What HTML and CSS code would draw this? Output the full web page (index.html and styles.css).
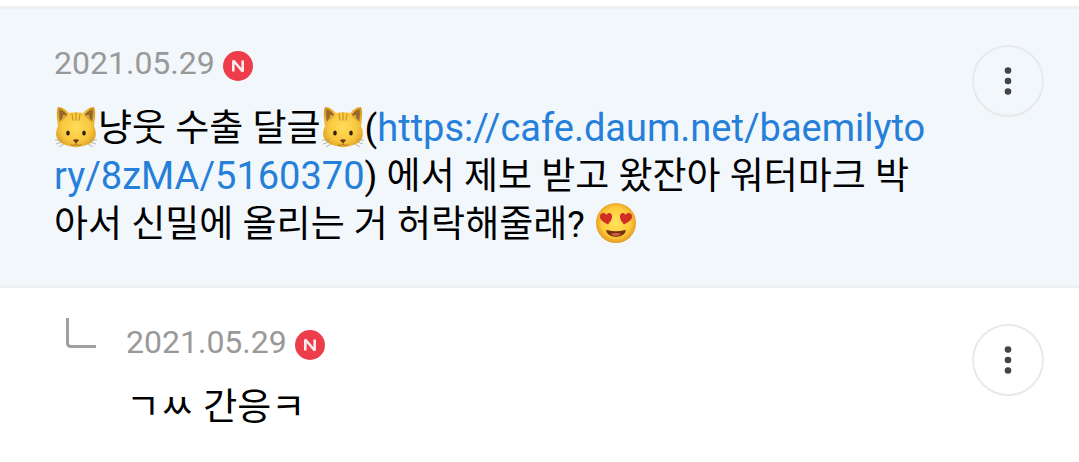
FILE: index.html
```
<!DOCTYPE html>
<html lang="ko">
<head>
<meta charset="utf-8">
<meta name="viewport" content="width=device-width, initial-scale=1">
<title>댓글</title>
<link rel="stylesheet" href="styles.css">
</head>
<body>
<svg class="defs" width="0" height="0" aria-hidden="true">
  <defs>
    <radialGradient id="fur" cx="50%" cy="50%" r="60%">
      <stop offset="0" stop-color="#ffdc58"/><stop offset="0.6" stop-color="#f8c83e"/><stop offset="1" stop-color="#d99a20"/>
    </radialGradient>
    <radialGradient id="skin" cx="50%" cy="48%" r="52%">
      <stop offset="0" stop-color="#ffe45a"/><stop offset="0.7" stop-color="#fdcb3a"/><stop offset="1" stop-color="#e69a25"/>
    </radialGradient>
    <symbol id="cat" viewBox="0 0 42 42">
      <path d="M3 20C2 13 1 5 3 1c4 0 8 3 11 6 5-1 9-1 14 0 3-3 7-6 11-6 2 4 1 12 0 19 2 4 2.500 9 1 12-2 5-8 7-12 8-5 1.500-9 1.500-14 0-4-1-10-3-12-8-1.500-3-1-8 1-12z" fill="url(#fur)"/>
      <path d="M4.500 3c3 1 6 3 8 6-3 1-6 4-7.500 7-1-5-1-9-.5-13zM37.500 3c-3 1-6 3-8 6 3 1 6 4 7.500 7 1-5 1-9 .5-13z" fill="#96692a"/>
      <path d="M8 9c2 0 3 .5 4.500 1.500-2 1-4 2.500-5.500 5.500zM34 9c-2 0-3 .5-4.500 1.500 2 1 4 2.500 5.500 5.500z" fill="#dba83c"/>
      <path d="M17 8l1 6M21 7v7M25 8l-1 6" stroke="#cf9628" stroke-width="1.300" fill="none" stroke-linecap="round"/>
      <ellipse cx="13" cy="27" rx="1.800" ry="2.600" fill="#33200c"/><ellipse cx="29" cy="27" rx="1.800" ry="2.600" fill="#33200c"/>
      <path d="M17.800 34q3.200-1.500 6.400 0l-3.200 3.500z" fill="#6c3b1b"/>
      <path d="M21 37v1.500M21 38.500q-3 2-5 0M21 38.500q3 2 5 0" stroke="#9c6822" fill="none" stroke-width=".8"/>
      <path d="M7 34l-7 0M7 36l-6 2M9 38l-5 3M35 34l7 0M35 36l6 2M33 38l5 3" stroke="#a99a78" stroke-width=".7"/>
    </symbol>
    <symbol id="hearts" viewBox="0 0 42 42">
      <circle cx="21" cy="21" r="20" fill="url(#skin)"/>
      <path d="M13 22.500C8 20 4 17 5 13.500c1-3 4.500-3.500 6.500-.500C13 10 16.500 10.500 17 13.500c.5 3.500-2 6.500-4 9z" fill="#cf2f26"/>
      <path d="M29 22.500c5-2.500 9-5.500 8-9-1-3-4.500-3.500-6.500-.500C29 10 25.500 10.500 25 13.500c-.5 3.500 2 6.500 4 9z" fill="#cf2f26"/>
      <path d="M12 28q9 2.500 18 0c1 0 .8 1 .5 2-2 3.500-6 4.800-9.500 4.800s-7.500-1.300-9.500-4.800c-.3-1-.5-2 .5-2z" fill="#70310f"/>
      <path d="M15.500 32q5.500-2 11 0-2.300 2-5.500 2t-5.500-2z" fill="#d85a42"/>
    </symbol>
    <symbol id="new" viewBox="0 0 30 30">
      <circle cx="15" cy="15" r="15" fill="#ed3d4b"/>
      <path d="M10.300 20.500v-11l9.400 11v-11" fill="none" stroke="#fff" stroke-opacity=".9" stroke-width="2.600" stroke-linejoin="bevel"/>
    </symbol>
    <symbol id="dots" viewBox="0 0 8 28">
      <circle cx="4" cy="3.500" r="3.300"/><circle cx="4" cy="14" r="3.300"/><circle cx="4" cy="24.500" r="3.300"/>
    </symbol>
  </defs>
</svg>
<main class="comments">
  <article class="comment comment-active">
    <div class="content">
      <header class="meta"><time datetime="2021-05-29">2021.05.29</time><svg class="new" role="img" aria-label="새 댓글"><use href="#new"/></svg></header>
      <p class="text"><svg class="emoji" role="img" aria-label="고양이"><use href="#cat"/></svg>냥웃 수출 달글<svg class="emoji" role="img" aria-label="고양이"><use href="#cat"/></svg>(<a href="https://cafe.daum.net/baemilytory/8zMA/5160370">https://cafe.daum.net/baemilytory/8zMA/5160370</a>) 에서 제보 받고 왔잔아 워터마크 박아서 신밀에 올리는 거 허락해줄래? <svg class="emoji" role="img" aria-label="하트 눈"><use href="#hearts"/></svg></p>
    </div>
    <button class="more" type="button" aria-label="더보기"><svg class="dots"><use href="#dots"/></svg></button>
  </article>
  <article class="comment reply">
    <svg class="branch" viewBox="0 0 30 30" aria-hidden="true"><path d="M1.500 0v25q0 3.500 3.500 3.500h25" fill="none" stroke="#a0a0a0" stroke-width="3"/></svg>
    <div class="content">
      <header class="meta"><time datetime="2021-05-29">2021.05.29</time><svg class="new" role="img" aria-label="새 댓글"><use href="#new"/></svg></header>
      <p class="text">ㄱㅆ 간응ㅋ</p>
    </div>
    <button class="more" type="button" aria-label="더보기"><svg class="dots"><use href="#dots"/></svg></button>
  </article>
</main>
</body>
</html>
```
FILE: styles.css
```
* { box-sizing: border-box; }
body {
  margin: 0;
  background: #fff;
  color: #000;
  font-family: Roboto, "Noto Sans CJK KR", sans-serif;
}
.defs { display: block; }
.comments { padding-top: 6px; }
.comment {
  display: flex;
  align-items: flex-start;
  padding: 34px 35px 36px 54px;
  border-top: 3px solid #eeeff0;
}
.comment-active { background: #f2f7fc; }
.reply { padding: 30px 35px 30px 66px; }
.content {
  flex: 1;
  min-width: 0;
  padding-right: 46px;
}
.reply .content { padding-top: 4px; }
.meta {
  display: flex;
  align-items: center;
  gap: 8px;
  height: 40px;
  color: #999;
  font-size: 32px;
  line-height: 40px;
}
.new {
  width: 30px;
  height: 30px;
  margin-top: 6px;
}
.text {
  margin: 22px 0 0;
  font-size: 37px;
  line-height: 48px;
  word-break: break-all;
}
.text a {
  color: #267fd9;
  font-size: 38px;
  line-height: 40px;
  text-decoration: none;
}
.emoji {
  width: 42px;
  height: 42px;
  margin: 0 1px;
  vertical-align: -7px;
}
.more {
  display: flex;
  flex: none;
  align-items: center;
  justify-content: center;
  width: 72px;
  height: 72px;
  margin-top: 2px;
  padding: 0;
  border: 2px solid #e8e9ea;
  border-radius: 50%;
  background: transparent;
  cursor: pointer;
}
.reply .more { margin-top: 6px; }
.dots {
  width: 8px;
  height: 28px;
  fill: #444;
}
.branch {
  flex: none;
  width: 30px;
  height: 30px;
  margin-right: 30px;
}
```
